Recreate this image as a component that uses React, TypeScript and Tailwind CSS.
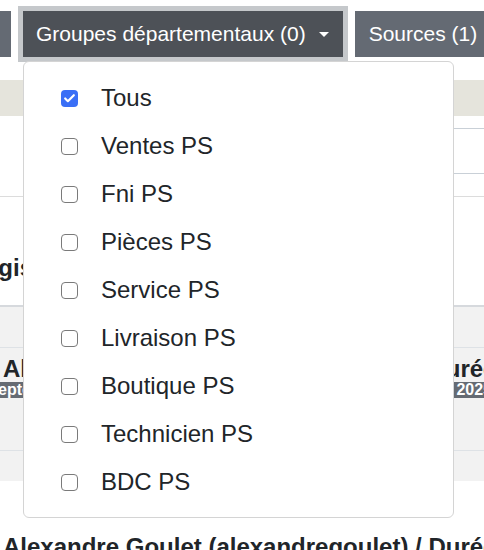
import { Check } from "lucide-react";

const groups = [
    { label: "Tous", checked: true },
    { label: "Ventes PS", checked: false },
    { label: "Fni PS", checked: false },
    { label: "Pièces PS", checked: false },
    { label: "Service PS", checked: false },
    { label: "Livraison PS", checked: false },
    { label: "Boutique PS", checked: false },
    { label: "Technicien PS", checked: false },
    { label: "BDC PS", checked: false },
];

function Box({ checked }: { checked: boolean }) {
    return checked ? (
        <span className="flex h-[17px] w-[17px] shrink-0 items-center justify-center rounded-[4px] bg-[#3a6ff6]">
            <Check size={13} strokeWidth={4} className="text-white" />
        </span>
    ) : (
        <span className="h-[17px] w-[17px] shrink-0 rounded-[4px] border border-[#7a7a7a] bg-white" />
    );
}

export default function App() {
    return (
        <div className="relative h-[550px] w-[484px] overflow-hidden bg-white font-['Liberation_Sans',Arial,sans-serif] text-[#212529]">
            {/* toolbar */}
            <div className="flex gap-3 pt-[11px]">
                <button
                    type="button"
                    className="-ml-[150px] h-[46px] w-[161px] shrink-0 bg-[#646a73] text-[21px] text-white"
                >
                    Départements
                </button>
                <button
                    type="button"
                    className="flex h-[46px] shrink-0 items-center bg-[#4d5157] px-[13px] pr-[14px] text-[21px] whitespace-nowrap text-white ring-[5px] ring-[#c5c8cb]"
                >
                    Groupes départementaux (0)
                    <span className="ml-[13px] h-0 w-0 border-x-[5px] border-t-[5px] border-x-transparent border-t-white" />
                </button>
                <button
                    type="button"
                    className="flex h-[46px] shrink-0 items-center bg-[#646a73] px-[14px] text-[21px] whitespace-nowrap text-white"
                >
                    Sources (1)
                </button>
            </div>

            {/* page behind the menu */}
            <div className="mt-[23px] h-[36px] bg-[#e5e4dc]" />

            <div className="mt-[12px] flex justify-end">
                <div className="-mr-[10px] h-[46px] w-[300px] rounded-[4px] border border-[#c9d0d7]" />
            </div>

            <div className="mt-[22px] border-t border-[#dcdcdc]" />

            <h2 className="-ml-[55px] mt-[56px] text-[24px] leading-[29px] font-bold whitespace-nowrap">
                Enregistrements
            </h2>

            <div className="mt-[23px]">
                <div className="h-[42px] border-t-2 border-[#d6d9dd] bg-[#f2f2f2]" />
                <div className="h-[103px] border-t border-[#dee2e6] bg-[#f2f2f2] pt-[9px]">
                    <div className="pl-[3px] text-[24px] leading-[24px] font-bold whitespace-nowrap">
                        Alexandre Goulet (alexandregoulet) / Durée
                    </div>
                    <div className="mt-[1px] flex h-[16px] justify-between overflow-hidden bg-[#656b73] text-[16px] leading-[16px] font-bold text-white">
                        <span className="-ml-[2px]">eptembre 2025</span>
                        <span className="-mr-[8px]">2025</span>
                    </div>
                </div>
                <div className="h-[31px] border-t border-[#dee2e6] bg-[#f2f2f2]" />
            </div>

            <div className="mt-[51px] pl-[3px] text-[24px] leading-[29px] font-bold whitespace-nowrap">
                Alexandre Goulet (alexandregoulet) / Durée
            </div>

            {/* dropdown */}
            <div className="absolute top-[61px] left-[23px] w-[431px] rounded-[6px] border border-[#d4d4d4] bg-white pt-[12px] pb-[11px]">
                {groups.map(({ label, checked }) => (
                    <label
                        key={label}
                        className="flex h-[48px] items-center pl-[37px]"
                    >
                        <Box checked={checked} />
                        <span className="ml-[23px] text-[24px]">{label}</span>
                    </label>
                ))}
            </div>
        </div>
    );
}
